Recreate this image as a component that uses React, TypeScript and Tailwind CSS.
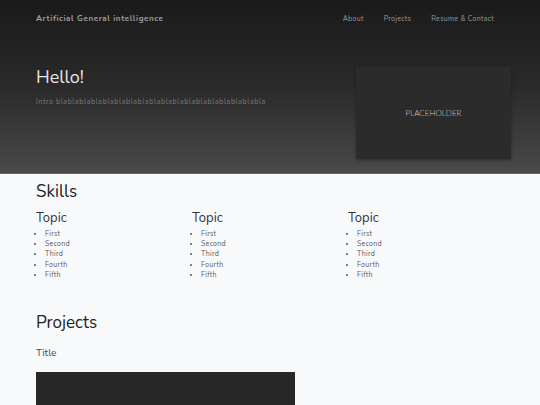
import React from 'react';

const topics = ['First', 'Second', 'Third', 'Fourth', 'Fifth'];

const SkillColumn: React.FC = () => (
  <div className="w-[156px]">
    <h3 className="text-[13px] leading-[16px] text-[#333]">Topic</h3>
    <ul className="mt-[3px] list-disc pl-[9px] text-[7px] leading-[10.2px] text-[#585858] tracking-[0.3px]">
      {topics.map(t => (
        <li key={t}>{t}</li>
      ))}
    </ul>
  </div>
);

export default function App() {
  return (
    <div className="min-h-[405px] bg-[#f8f9fb] font-['Nunito','Lato','Noto_Sans',sans-serif]">
      <header className="h-[174px] bg-gradient-to-b from-[#1a1a1a] via-[#2a2a2a] to-[#4a4a4a] border-b border-[#666]">
        <nav className="flex items-center justify-between px-[36px] pt-[14px] h-[24px]">
          <span className="text-[8px] font-bold text-[#a0a0a0] tracking-[0.6px]">Artificial General intelligence</span>
          <div className="flex gap-[20px] pr-[10px] text-[7px] text-[#9a9a9a] tracking-[0.3px]">
            <a>About</a>
            <a>Projects</a>
            <a>Resume &amp; Contact</a>
          </div>
        </nav>
        <div className="flex justify-between pl-[36px] pr-[29px] pt-[43px]">
          <div>
            <h1 className="text-[18px] leading-[20px] text-[#e6e6e6]">Hello!</h1>
            <p className="mt-[10px] text-[7px] text-[#7a7a7a] tracking-[0.6px]">Intro blablablablablablablablablablablablablablablablablabla</p>
          </div>
          <div className="flex h-[92px] w-[155px] items-center justify-center bg-[#2b2b2b] shadow-[0_1px_3px_rgba(0,0,0,0.35)]">
            <span className="font-['Lato',sans-serif] font-light text-[8px] text-[#cfcfcf]">PLACEHOLDER</span>
          </div>
        </div>
      </header>
      <section className="px-[36px] pt-[8px]">
        <h2 className="text-[17px] leading-[20px] text-[#222]">Skills</h2>
        <div className="mt-[8px] flex">
          <SkillColumn />
          <SkillColumn />
          <SkillColumn />
        </div>
      </section>
      <section className="px-[36px] pt-[33px]">
        <h2 className="text-[17px] leading-[20px] text-[#222]">Projects</h2>
        <h4 className="mt-[14px] text-[10px] leading-[12px] text-[#444]">Title</h4>
        <div className="mt-[13px] h-[40px] w-[259px] bg-[#272727]"></div>
      </section>
    </div>
  );
}
